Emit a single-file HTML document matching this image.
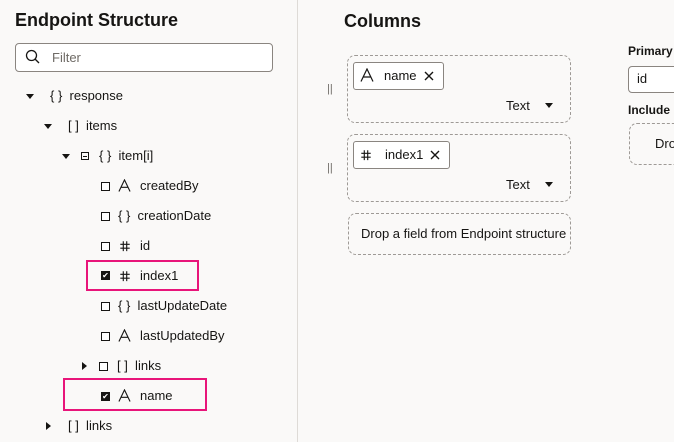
<!DOCTYPE html>
<html><head><style>
*{box-sizing:border-box;margin:0;padding:0}
body{width:674px;height:442px;overflow:hidden;background:#faf9f8;font-family:"Liberation Sans",sans-serif;color:#161513;position:relative;font-size:13px}
.a{position:absolute;white-space:nowrap;line-height:16px}
.h{font-weight:bold;font-size:18px;line-height:22px}
.tri{width:0;height:0;border-left:4px solid transparent;border-right:4px solid transparent;border-top:5px solid #161513}
.trr{width:0;height:0;border-top:4px solid transparent;border-bottom:4px solid transparent;border-left:5px solid #161513}
.cb{width:9px;height:9px;border:1.3px solid #161513;background:#fff}
.cbc{width:9px;height:9px;background:#161513;color:#fff;font-size:8px;line-height:9px;text-align:center}
.dash{border:1px dashed #9e9a96;border-radius:8px}
.chip{border:1px solid #8a8580;border-radius:3px;background:#fff}
.pink{border:2px solid #e8157a}
svg.i{position:absolute}
</style></head><body>
<svg width="0" height="0" style="position:absolute"><defs>
<symbol id="A" viewBox="0 0 14 14"><path d="M1 13.5 L7 1 L13 13.5 M3.6 9 H10.4" fill="none" stroke="#161513" stroke-width="1.2"/></symbol>
<symbol id="H" viewBox="0 0 14 14"><path d="M5 1.5 V13 M9 1.5 V13 M1.5 5 H12.5 M1.5 9.5 H12.5" fill="none" stroke="#161513" stroke-width="1.3"/></symbol>
</defs></svg>
<div class="a h" style="left:15px;top:9px">Endpoint Structure</div>
<div class="a" style="left:15px;top:43px;width:258px;height:29px;border:1px solid #8a8580;border-radius:4px;background:#fff"></div>
<svg class="a" style="left:25px;top:49px" width="16" height="16"><circle cx="6.5" cy="6.5" r="5" fill="none" stroke="#161513" stroke-width="1.3"/><line x1="10" y1="10" x2="14" y2="14" stroke="#161513" stroke-width="1.3"/></svg>
<div class="a" style="left:52px;top:50px;color:#6f6b66">Filter</div>
<div style="position:absolute;left:297px;top:0;width:1px;height:442px;background:#dedbd7"></div>

<div class="a tri" style="left:26px;top:94px"></div>
<div class="a" style="left:50px;top:88px">{ }&nbsp; response</div>
<div class="a tri" style="left:44px;top:124px"></div>
<div class="a" style="left:68px;top:118px">[ ]&nbsp; items</div>
<div class="a tri" style="left:62px;top:154px"></div>
<div class="a" style="left:81px;top:152px;width:8px;height:8px;border:1px solid #161513;"></div>
<div class="a" style="left:83px;top:155.5px;width:4px;height:1px;background:#161513"></div>
<div class="a" style="left:99px;top:148px">{ }&nbsp; item[i]</div>

<div class="a cb" style="left:101px;top:182px"></div><svg class="i" style="left:118px;top:179px" width="13" height="13"><use href="#A"/></svg><div class="a" style="left:140px;top:178px">createdBy</div>
<div class="a cb" style="left:101px;top:212px"></div><div class="a" style="left:118px;top:208px">{ }&nbsp; creationDate</div>
<div class="a cb" style="left:101px;top:242px"></div><svg class="i" style="left:119px;top:240px" width="12" height="12"><use href="#H"/></svg><div class="a" style="left:140px;top:238px">id</div>
<div class="a pink" style="left:86px;top:260px;width:113px;height:31px"></div>
<div class="a cbc" style="left:101px;top:271px">✔</div><svg class="i" style="left:119px;top:270px" width="12" height="12"><use href="#H"/></svg><div class="a" style="left:140px;top:268px">index1</div>
<div class="a cb" style="left:101px;top:302px"></div><div class="a" style="left:118px;top:298px">{ }&nbsp; lastUpdateDate</div>
<div class="a cb" style="left:101px;top:332px"></div><svg class="i" style="left:118px;top:329px" width="13" height="13"><use href="#A"/></svg><div class="a" style="left:140px;top:328px">lastUpdatedBy</div>
<div class="a trr" style="left:82px;top:362px"></div>
<div class="a cb" style="left:99px;top:362px"></div><div class="a" style="left:117px;top:358px">[ ]&nbsp; links</div>
<div class="a pink" style="left:63px;top:378px;width:144px;height:33px"></div>
<div class="a cbc" style="left:101px;top:392px">✔</div><svg class="i" style="left:118px;top:389px" width="13" height="13"><use href="#A"/></svg><div class="a" style="left:140px;top:388px">name</div>
<div class="a trr" style="left:46px;top:422px"></div>
<div class="a" style="left:68px;top:418px">[ ]&nbsp; links</div>

<div class="a h" style="left:344px;top:10px">Columns</div>
<div class="a" style="left:327px;top:81px;font-size:11px;color:#6f6b66">||</div>
<div class="a" style="left:327px;top:160px;font-size:11px;color:#6f6b66">||</div>
<div class="a dash" style="left:347px;top:55px;width:224px;height:68px"></div>
<div class="a chip" style="left:353px;top:62px;width:91px;height:28px"></div>
<svg class="i" style="left:360px;top:68px" width="14" height="14"><use href="#A"/></svg>
<div class="a" style="left:384px;top:68px">name</div>
<svg class="i" style="left:424px;top:71px" width="10" height="10"><path d="M1 1L9 9M9 1L1 9" stroke="#161513" stroke-width="1.4"/></svg>
<div class="a" style="left:506px;top:98px">Text</div><div class="a tri" style="left:545px;top:103px"></div>
<div class="a dash" style="left:347px;top:134px;width:224px;height:68px"></div>
<div class="a chip" style="left:353px;top:141px;width:97px;height:28px"></div>
<svg class="i" style="left:360px;top:149px" width="12" height="12"><use href="#H"/></svg>
<div class="a" style="left:385px;top:147px">index1</div>
<svg class="i" style="left:430px;top:150px" width="10" height="10"><path d="M1 1L9 9M9 1L1 9" stroke="#161513" stroke-width="1.4"/></svg>
<div class="a" style="left:506px;top:177px">Text</div><div class="a tri" style="left:545px;top:182px"></div>
<div class="a dash" style="left:348px;top:213px;width:223px;height:42px"></div>
<div class="a" style="left:361px;top:226px">Drop a field from Endpoint structure</div>

<div class="a" style="left:628px;top:43px;font-weight:bold;font-size:12px">Primary</div>
<div class="a" style="left:628px;top:66px;width:60px;height:27px;border:1px solid #8a8580;border-radius:4px;background:#fff"></div>
<div class="a" style="left:637px;top:71px">id</div>
<div class="a" style="left:628px;top:102px;font-weight:bold;font-size:12px">Include i</div>
<div class="a dash" style="left:629px;top:123px;width:70px;height:42px"></div>
<div class="a" style="left:655px;top:136px">Dro</div>
</body></html>
